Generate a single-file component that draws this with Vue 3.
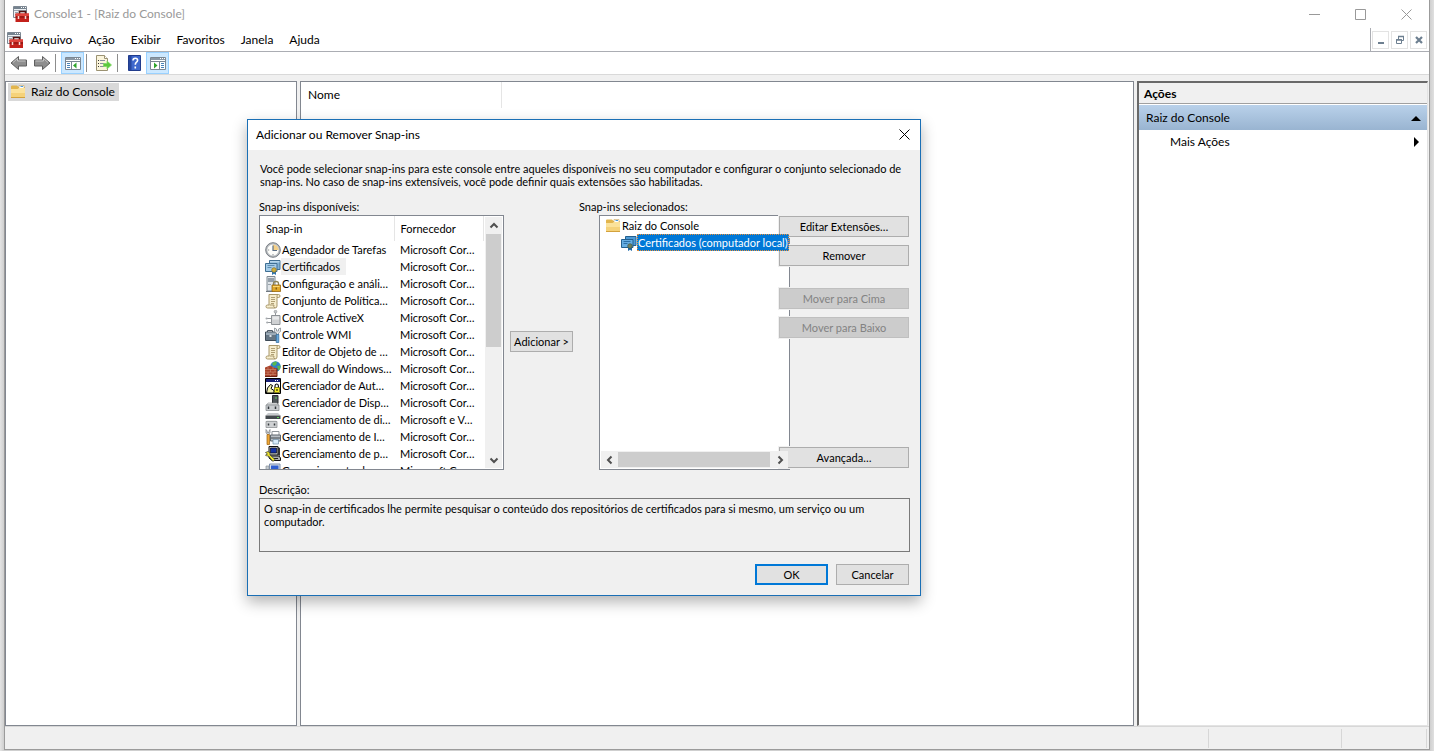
<script setup>
const menus = ['Arquivo', 'Ação', 'Exibir', 'Favoritos', 'Janela', 'Ajuda']

const scroll =
  '<path d="M4 1.500h9.500q1.500 0 1.500 1.500t-1.500 1.500H12V13q0 2-2 2H2.500Q1 15 1 13.500T2.500 12H4z" fill="#f6edcd" stroke="#a8976a"/><path d="M4.500 12H9q-1 1.500 1 3M12 4.500q-.5-2 1-3" fill="none" stroke="#a8976a"/><path d="M6 4.500h4M6 6.500h4M6 8.500h4M6 10.500h3" stroke="#b09f75"/>'

const icons = {
  console:
    '<path d="M.5.500h13v11H.5z" fill="#eef1f4" stroke="#7d8893"/><path d="M1 1h12v2H1z" fill="#75838f"/><path d="M8 1.500h1M10 1.500h1M12 1.500h1" stroke="#fff"/><path d="M1 4.500h12" stroke="#9aa5af"/><path d="M2 6.500h3M2 8.500h2" stroke="#9aa4ae"/><path d="M6.500 8V5.500h6V8" fill="none" stroke="#4e1410" stroke-width="1.600"/><path d="M2.500 7.500H16V16H2.500z" fill="#c3211b"/><path d="M2.500 7.500H16V10H2.500z" fill="#e0453d"/><path d="M2.500 11h13.500" stroke="#7d100c"/><path d="M5.500 10v3M12.500 10v3" stroke="#f4d8d3" stroke-width="1.500"/>',
  folder:
    '<path d="M1 2.500q0-1 1-1h5l1.500 1.500H14q1 0 1 1V14H1z" fill="#e2b54d"/><path d="M9 1.500h5v4H9z" fill="#fff" stroke="#c9a45c" stroke-width=".6"/><path d="M10.500 2.500H13" stroke="#4b9bdc"/><path d="M1 5h6.500L9 4h6v10H1z" fill="#fbe29b"/><path d="M1 9h14v5H1z" fill="#f5d27a"/><path d="M1 13.500h14" stroke="#d3a23d"/>',
  clock:
    '<circle cx="8" cy="8" r="7.300" fill="#b9bdc1" stroke="#777d83"/><circle cx="8" cy="8" r="5.600" fill="#fdfdfa"/><path d="M8 8V2.400A5.600 5.600 0 0 1 13.600 8z" fill="#f3cf87"/><path d="M8 3.500V8.500h4" fill="none" stroke="#5c6f86" stroke-width="1.200"/><path d="M8 12v1.300M3 8h1.200" stroke="#8b8f93"/>',
  certificate:
    '<path d="M4.500 1.500h10.500v9h-10.500z" fill="#7fb0d4" stroke="#3f6f93"/><path d="M5 2h9.500v1.500H5z" fill="#b5d6ec"/><path d="M.5 4.500h11.500v8H.5z" fill="#a5cce8" stroke="#3f6f93"/><path d="M2.500 6.500h7M2.500 8.500h4" stroke="#5d8fb3"/><path d="M7 11.500V16l2-1.200 2 1.200v-4.500z" fill="#2f74b0"/><circle cx="9" cy="11" r="2.300" fill="#cfae3c" stroke="#857127" stroke-width=".7"/>',
  certificateSelected:
    '<path d="M4.500 1.500h10.500v9h-10.500z" fill="#4c9ad6" stroke="#23608f"/><path d="M.5 4.500h11.500v8H.5z" fill="#65ade2" stroke="#23608f"/><path d="M2.500 6.500h7M2.500 8.500h4" stroke="#2a6fa6"/><path d="M7 11.500V16l2-1.200 2 1.200v-4.500z" fill="#1a68aa"/><circle cx="9" cy="11" r="2.300" fill="#6f7f5c" stroke="#3f5a4c" stroke-width=".7"/>',
  serverLock:
    '<path d="M2 .5h8v14.500H2z" fill="#dfe4e8" stroke="#7f8992"/><path d="M3 3h6M3 5h6" stroke="#4d5d6c"/><path d="M3 8.500h3" stroke="#9aa3ab"/><path d="M1 15.500h7" stroke="#6f7880"/><path d="M8.500 9V7.500q0-2 2.500-2t2.500 2V9" fill="none" stroke="#8d8457" stroke-width="1.300"/><path d="M7 9h8.500v6.500H7z" fill="#e0a82a" stroke="#94660e" stroke-width=".8"/><path d="M8 10.500h6.500" stroke="#f8d877"/><path d="M11.200 11.500v2" stroke="#5c4108"/>',
  scroll,
  activex:
    '<path d="M6.500 5.500h8.500v9H6.500z" fill="#cfd1d3" stroke="#8e9296"/><path d="M7.500 6.500h6.500v3H7.500z" fill="#e8e9ea"/><path d="M10.500 5V2M6 8.500H2M6 12.500H3" stroke="#94989c"/><circle cx="10.500" cy="1.700" r="1.400" fill="#c4c7ca" stroke="#8e9296" stroke-width=".6"/><circle cx="1.600" cy="8.500" r="1.100" fill="#a7abaf"/><circle cx="2.200" cy="12.500" r="1.100" fill="#a7abaf"/>',
  toolbox:
    '<path d="M2.500 5V3.500h5V5" fill="none" stroke="#4e5a66"/><path d="M.5 5h11v8.500H.5z" fill="#667684" stroke="#3e4a56"/><path d="M1 5.500h10v2.500H1z" fill="#9dacb9"/><path d="M4.500 8h2v2h-2z" fill="#dce2e7"/><path d="M9.500 1v3.500l2 1.500V8h2V6l2-1.500V1l-2 1v2h-2V2z" fill="#e7eaed" stroke="#7c858d" stroke-width=".7"/><path d="M11.200 7.500h2.600V15.500h-2.600z" fill="#69a9dc" stroke="#2d6799" stroke-width=".7"/>',
  firewall:
    '<circle cx="10.500" cy="5.500" r="5.200" fill="#2f82c8"/><path d="M7 2.500q3-3 5-1.500l-1 3-2.500 1zM12 5l3.500-.5q.5 3-2 5z" fill="#59b84f"/><path d="M0 6.500l5-2 5 2.500 2 .5v8H0z" fill="#a9442c"/><path d="M0 8.500h12M0 11h12M0 13.500h12M3 6v2.500M8 6v2.500M5.500 8.500V11M10 8.500V11M3 11v2.500M8 11v2.500M5.500 13.500v2" stroke="#d08f77" stroke-width=".6"/><path d="M0 15.500h12V7.500" fill="none" stroke="#6b2213"/>',
  authorization:
    '<path d="M.5.500h15v15H.5z" fill="#fff" stroke="#000"/><path d="M1 1h14v3H1z" fill="#1b2278"/><path d="M10 2.500h1M12 2.500h1" stroke="#fff"/><path d="M1.500 15l1-5 3-3.500 2 1-1.500 3 3 2V15z" fill="#f2f0b0" stroke="#000"/><path d="M10 10V8q0-2 1.700-2t1.700 2v2" fill="none" stroke="#000" stroke-width="1.100"/><path d="M9.500 9.500h5v5h-5z" fill="#f4ec24" stroke="#6b6400" stroke-width=".8"/><path d="M12 11v2" stroke="#000"/>',
  device:
    '<path d="M7.500.500h5.500v8H7.500z" fill="#4f5558" stroke="#2c3133"/><path d="M11 2v2" stroke="#5fd35b"/><path d="M3 8h9l1.500 2H1.500z" fill="#eceded" stroke="#8b8f92" stroke-width=".6"/><path d="M1 10h13v5.500H1z" fill="#c9cccf" stroke="#7d8185" stroke-width=".7"/><path d="M3.500 11.500v2.500M10.500 11.500v2.500" stroke="#303538" stroke-width="1.500"/>',
  disk:
    '<path d="M3 1h10l2.500 2.500H.5z" fill="#c7cacd"/><path d="M.5 3.500h15v3.500H.5z" fill="#44494d"/><path d="M12 5.500h2" stroke="#5fd35b"/><path d="M2 8h9l1 1.500H1z" fill="#ececec"/><path d="M1 9.500h11v6H1z" fill="#cfd1d3" stroke="#84888b" stroke-width=".7"/><path d="M3.500 11.500v2M9.500 11.500v2" stroke="#33383b" stroke-width="1.500"/>',
  printer:
    '<path d="M7 2.500h7V7H7z" fill="#fff" stroke="#8f959a"/><path d="M5.500 6h10v6h-10z" fill="#b9bfc5" stroke="#5f676e"/><path d="M6 9h9" stroke="#3f464c"/><path d="M8 10.500h5.500v4.500H8z" fill="#d8ebfa" stroke="#6f8ca3" stroke-width=".7"/><path d="M1 .5v3.500l2 1.500 2-1.500V.5L4 2v1.500H2.200V2z" fill="#e5e7e9" stroke="#747a80" stroke-width=".7"/><path d="M2 5.500h2.500v10H2z" fill="#efa634" stroke="#9a5f0c" stroke-width=".7"/>',
  policies:
    '<path d="M4 .5h9v8.500H4z" fill="#c7c9cb" stroke="#111"/><path d="M5.500 2h6v5h-6z" fill="#1531a6" stroke="#000" stroke-width=".6"/><path d="M13 1l2 1v8l-2-1z" fill="#333"/><path d="M4 10h10l1.500 2v2.500H7L4 12z" fill="#aeb0b2" stroke="#111"/><path d="M8 12.500h5" stroke="#222"/><path d="M.5 6.500l2.500-1 2 1.500v2l5 4.500-2 2L3.500 10H1.500L.5 9l2-1z" fill="#f2ea2d" stroke="#333" stroke-width=".7"/>',
  computer:
    '<path d="M4.500 1h10.500v9H4.500z" fill="#d8dee4" stroke="#7d8fae"/><path d="M6 2.500h7.500V8H6z" fill="#2f5fd0"/><path d="M1 3h3v9H1z" fill="#c5cbd1" stroke="#8a9299" stroke-width=".7"/><path d="M3 12h10v3H3z" fill="#c8cdd1"/>'
}

const snapins = [
  ['clock', 'Agendador de Tarefas', 'Microsoft Cor…'],
  ['certificate', 'Certificados', 'Microsoft Cor…'],
  ['serverLock', 'Configuração e análi…', 'Microsoft Cor…'],
  ['scroll', 'Conjunto de Política…', 'Microsoft Cor…'],
  ['activex', 'Controle ActiveX', 'Microsoft Cor…'],
  ['toolbox', 'Controle WMI', 'Microsoft Cor…'],
  ['scroll', 'Editor de Objeto de …', 'Microsoft Cor…'],
  ['firewall', 'Firewall do Windows…', 'Microsoft Cor…'],
  ['authorization', 'Gerenciador de Aut…', 'Microsoft Cor…'],
  ['device', 'Gerenciador de Disp…', 'Microsoft Cor…'],
  ['disk', 'Gerenciamento de di…', 'Microsoft e V…'],
  ['printer', 'Gerenciamento de I…', 'Microsoft Cor…'],
  ['policies', 'Gerenciamento de p…', 'Microsoft Cor…'],
  ['computer', 'Gerenciamento do …', 'Microsoft Cor…']
]

const description =
  'O snap-in de certificados lhe permite pesquisar o conteúdo dos repositórios de certificados para si mesmo, um serviço ou um computador.'
</script>

<template>
  <div class="desktop">
    <div class="window">
      <header class="titlebar">
        <svg class="icon" viewBox="0 0 16 16" v-html="icons.console"></svg>
        <h1>Console1 - [Raiz do Console]</h1>
        <div class="caption-buttons">
          <button aria-label="Minimizar"><svg viewBox="0 0 11 11"><path d="M0 5.500h11" /></svg></button>
          <button aria-label="Maximizar"><svg viewBox="0 0 11 11"><path d="M.5.500h10v10H.5z" /></svg></button>
          <button aria-label="Fechar"><svg viewBox="0 0 11 11"><path d="M.5.500l10 10M10.500.500l-10 10" /></svg></button>
        </div>
      </header>

      <nav class="menubar">
        <svg class="icon" viewBox="0 0 16 16" v-html="icons.console"></svg>
        <button v-for="m in menus" :key="m" class="menu">{{ m }}</button>
        <div class="child-buttons">
          <button aria-label="Minimizar console"><svg viewBox="0 0 10 10"><path d="M2 8h6" stroke-width="2" /></svg></button>
          <button aria-label="Restaurar console">
            <svg viewBox="0 0 10 10"><path d="M3.500 4V1.500h5v4H7" /><path d="M3 1.500h6M1 5h6" stroke-width="1.500" /><path d="M1.500 4.500h5v4h-5z" /></svg>
          </button>
          <button aria-label="Fechar console"><svg viewBox="0 0 10 10"><path d="M2 2l6 6M8 2L2 8" stroke-width="2.200" /></svg></button>
        </div>
      </nav>

      <div class="toolbar">
        <button class="tool" aria-label="Voltar">
          <svg viewBox="0 0 18 16"><path d="M1 8l7.500-6.500V5H16.500v6H8.500v3.500z" fill="#8f8f8f" stroke="#5f5f5f" /><path d="M3 7.500L7.500 3.500V6H15.500" fill="none" stroke="#c4c4c4" /></svg>
        </button>
        <button class="tool" aria-label="Avançar">
          <svg viewBox="0 0 18 16"><path d="M17 8L9.500 1.500V5H1.500v6h8v3.500z" fill="#8f8f8f" stroke="#5f5f5f" /><path d="M2.500 6H10.500V3.500L15 7.500" fill="none" stroke="#c4c4c4" /></svg>
        </button>
        <span class="divider"></span>
        <button class="tool on" aria-label="Mostrar/ocultar árvore de console">
          <svg viewBox="0 -1 18 16"><path d="M1.500 1.500h15v12h-15z" fill="#fff" stroke="#7b8793" /><path d="M2 2h14v2H2z" fill="#8b98a5" /><path d="M11 2.500h1M13 2.500h1M15 2.500h1" stroke="#fff" /><path d="M2 5.500h14M7.500 6v7" stroke="#7b8793" /><path d="M3 7.500h3M3 9.500h3M3 11.500h3" stroke="#4a83b8" /><path d="M12.500 6.500v6L9 9.500z" fill="#2fa52b" /></svg>
        </button>
        <span class="divider"></span>
        <button class="tool" aria-label="Exportar lista">
          <svg viewBox="0 0 18 16"><path d="M1.500.500h8l3 3v12h-11z" fill="#fbf5dc" stroke="#9b9272" /><path d="M9.500.500v3h3" fill="#fff" stroke="#9b9272" /><path d="M3 5.500h1M3 8.500h1M3 11.500h1" stroke="#333" /><path d="M5 5.500h5M5 8.500h4M5 11.500h4" stroke="#8a8fa0" /><path d="M8.500 8.500h3.500V6l4.500 4-4.500 4v-2.500H8.500z" fill="#5cc83c" stroke="#7fd566" stroke-width=".8" /></svg>
        </button>
        <span class="divider"></span>
        <button class="tool" aria-label="Ajuda">
          <svg viewBox="0 0 18 16"><path d="M2.500.500h12v15h-12z" fill="#3f68cc" stroke="#213c8c" /><path d="M3 1h2.500v14H3z" fill="#27479f" /><path d="M7 5.500q0-2.300 2.300-2.300t2.300 2.100q0 1.300-1.300 2.100-1 .8-1 2.300M9.300 11.500v2" fill="none" stroke="#fff" stroke-width="1.600" /></svg>
        </button>
        <button class="tool on" aria-label="Mostrar/ocultar painel de ações">
          <svg viewBox="0 -1 18 16"><path d="M1.500 1.500h15v12h-15z" fill="#fff" stroke="#7b8793" /><path d="M2 2h14v2H2z" fill="#8b98a5" /><path d="M11 2.500h1M13 2.500h1M15 2.500h1" stroke="#fff" /><path d="M2 5.500h14M10.500 6v7" stroke="#7b8793" /><path d="M12 7.500h3M12 9.500h3M12 11.500h3" stroke="#4a83b8" /><path d="M5 6.500v6l3.500-3z" fill="#2fa52b" /></svg>
        </button>
      </div>

      <main class="panes">
        <section class="pane tree-pane">
          <div class="node">
            <svg class="icon" viewBox="0 0 16 16" v-html="icons.folder"></svg>
            <span>Raiz do Console</span>
          </div>
        </section>
        <section class="pane list-pane">
          <div class="list-head">Nome</div>
        </section>
        <aside class="actions">
          <h2>Ações</h2>
          <button class="group">Raiz do Console<svg viewBox="0 0 10 10"><path d="M0 8l5-5 5 5z" /></svg></button>
          <button class="more">Mais Ações<svg viewBox="0 0 10 10"><path d="M3 0l5 5-5 5z" /></svg></button>
        </aside>
      </main>

      <footer class="statusbar"><span></span><span></span><span></span></footer>
    </div>

    <div class="dialog" role="dialog" aria-labelledby="dialog-title">
      <header class="dialog-title">
        <h2 id="dialog-title">Adicionar ou Remover Snap-ins</h2>
        <button aria-label="Fechar diálogo"><svg viewBox="0 0 11 11"><path d="M.5.500l10 10M10.500.500l-10 10" /></svg></button>
      </header>
      <div class="dialog-body">
        <p class="intro">
          Você pode selecionar snap-ins para este console entre aqueles disponíveis no seu computador e configurar o conjunto selecionado de
          snap-ins. No caso de snap-ins extensíveis, você pode definir quais extensões são habilitadas.
        </p>
        <div class="columns">
          <div class="available">
            <div id="available-label" class="label">Snap-ins disponíveis:</div>
            <div class="box">
              <div class="table-clip">
                <table aria-labelledby="available-label">
                  <thead>
                    <tr><th class="name">Snap-in</th><th>Fornecedor</th></tr>
                  </thead>
                  <tbody>
                    <tr v-for="(s, i) in snapins" :key="s[1]">
                      <td class="name">
                        <div class="snapin">
                          <svg class="icon" viewBox="0 0 16 16" v-html="icons[s[0]]"></svg>
                          <span :class="{ current: i === 1 }">{{ s[1] }}</span>
                        </div>
                      </td>
                      <td>{{ s[2] }}</td>
                    </tr>
                  </tbody>
                </table>
              </div>
              <div class="vscroll">
                <button aria-label="Rolar para cima"><svg viewBox="0 0 10 10"><path d="M1.500 6.500L5 3l3.500 3.500" /></svg></button>
                <div class="track"><div class="thumb"></div></div>
                <button aria-label="Rolar para baixo"><svg viewBox="0 0 10 10"><path d="M1.500 3.500L5 7l3.500-3.500" /></svg></button>
              </div>
            </div>
          </div>

          <button class="btn add">Adicionar &gt;</button>

          <div class="selected">
            <div class="label">Snap-ins selecionados:</div>
            <div class="box tree">
              <div class="tree-row">
                <svg class="icon" viewBox="0 0 16 16" v-html="icons.folder"></svg>
                <span>Raiz do Console</span>
              </div>
              <div class="tree-row child">
                <svg class="icon" viewBox="0 0 16 16" v-html="icons.certificateSelected"></svg>
                <span class="highlight">Certificados (computador local)</span>
              </div>
              <div class="hscroll">
                <button aria-label="Rolar para a esquerda"><svg viewBox="0 0 10 10"><path d="M6.500 1.500L3 5l3.500 3.500" /></svg></button>
                <div class="thumb"></div>
                <button aria-label="Rolar para a direita"><svg viewBox="0 0 10 10"><path d="M3.500 1.500L7 5 3.500 8.500" /></svg></button>
              </div>
            </div>
          </div>

          <div class="side">
            <button class="btn">Editar Extensões…</button>
            <button class="btn">Remover</button>
            <button class="btn up" disabled>Mover para Cima</button>
            <button class="btn" disabled>Mover para Baixo</button>
            <button class="btn advanced">Avançada…</button>
          </div>
        </div>

        <label class="label" for="description">Descrição:</label>
        <textarea id="description" readonly :value="description"></textarea>

        <div class="actions-row">
          <button class="btn default">OK</button>
          <button class="btn">Cancelar</button>
        </div>
      </div>
    </div>
  </div>
</template>

<style>
body {
  background: #d9d9d9;
}
</style>

<style scoped>
.desktop {
  position: relative;
  display: flex;
  box-sizing: border-box;
  min-height: 100vh;
  padding: 0 4px 1px;
  background: linear-gradient(90deg, #e4e4e4, #cfcfcf 4px, #cfcfcf calc(100% - 4px), #e0e0e0);
  font: 12px/16px Lato, "Open Sans", sans-serif;
  color: #000;
}
* {
  box-sizing: border-box;
}
button {
  padding: 0;
  border: 0;
  background: none;
  color: inherit;
  font: inherit;
}
h1,
h2,
p {
  margin: 0;
  font: inherit;
}
.icon {
  flex: none;
  width: 16px;
  height: 16px;
}
.window {
  display: flex;
  flex: 1;
  flex-direction: column;
  border: solid #9b9b9b;
  border-width: 0 1px 1px;
  background: #f0f0f0;
}
.titlebar {
  display: flex;
  align-items: center;
  gap: 5px;
  height: 28px;
  padding-left: 8px;
  background: #fff;
  color: #999;
}
.caption-buttons {
  display: flex;
  margin-left: auto;
}
.caption-buttons button {
  display: grid;
  place-items: center;
  width: 46px;
  height: 27px;
}
.caption-buttons svg,
.dialog-title svg {
  width: 11px;
  height: 11px;
  fill: none;
  stroke: #999;
}
.menubar {
  display: flex;
  align-items: center;
  height: 24px;
  padding-left: 2px;
  border-bottom: 1px solid #abadb3;
  background: #fff;
}
.menu {
  height: 22px;
  padding: 0 8px;
}
.child-buttons {
  display: flex;
  align-items: center;
  align-self: stretch;
  gap: 2px;
  margin-left: auto;
  padding: 0 2px 0 1px;
  border-left: 1px solid #abadb3;
}
.child-buttons button {
  display: grid;
  place-items: center;
  width: 17px;
  height: 18px;
  border: 1px solid #e3e3e3;
}
.child-buttons svg {
  width: 10px;
  height: 10px;
  fill: none;
  stroke: #6d7f90;
}
.toolbar {
  display: flex;
  align-items: center;
  height: 23px;
  padding-left: 2px;
  border-bottom: 1px solid #d9d9d9;
  background: #fff;
}
.tool {
  display: grid;
  place-items: center;
  width: 23px;
  height: 22px;
}
.tool svg {
  width: 18px;
  height: 16px;
}
.tool.on {
  border: 1px solid #99d1ff;
  background: #cce8ff;
}
.divider {
  width: 1px;
  height: 18px;
  margin: 0 5px 0 2px;
  background: #8d8d8d;
}
.panes {
  display: flex;
  flex: 1;
  gap: 3px;
  padding-top: 6px;
}
.pane {
  border: 1px solid #828790;
  background: #fff;
}
.tree-pane {
  width: 292px;
  padding: 1px 2px;
}
.node {
  display: flex;
  align-items: center;
  gap: 5px;
  width: max-content;
  height: 18px;
  padding: 0 4px 0 2px;
  background: #d9d9d9;
}
.list-pane {
  flex: 1;
}
.list-head {
  width: 201px;
  height: 26px;
  padding-left: 7px;
  border-right: 1px solid #e5e5e5;
  line-height: 26px;
}
.actions {
  width: 291px;
  margin-right: 1px;
  border: 1px solid #e3e3e3;
  border-top: 2px solid #696969;
  border-left: 2px solid #696969;
  background: #fff;
}
.actions h2 {
  height: 21px;
  padding-left: 5px;
  border-bottom: 1px solid #a0a0a0;
  background: #f0f0f0;
  font-weight: 700;
  line-height: 21px;
}
.actions button {
  display: flex;
  align-items: center;
  justify-content: space-between;
  width: 100%;
  height: 25px;
  padding: 0 6px 0 7px;
}
.actions .group {
  margin-top: 1px;
  background: linear-gradient(#b9d1ea, #99b4d1);
}
.actions .more {
  height: 24px;
  padding-left: 31px;
}
.actions svg {
  width: 10px;
  height: 10px;
}
.statusbar {
  display: flex;
  justify-content: flex-end;
  height: 23px;
  padding: 2px 2px 1px;
  border-top: 1px solid #d7d7d7;
}
.statusbar span {
  border-right: 1px solid #d7d7d7;
}
.statusbar span:nth-child(2) {
  width: 133px;
}
.statusbar span:nth-child(3) {
  width: 85px;
}
.dialog {
  position: absolute;
  top: 119px;
  left: 247px;
  width: 674px;
  border: 1px solid #1a6fb5;
  background: #f0f0f0;
  box-shadow: 0 6px 14px rgba(0, 0, 0, 0.3);
}
.dialog-title {
  display: flex;
  align-items: center;
  justify-content: space-between;
  height: 30px;
  padding: 0 10px 0 8px;
  background: #fff;
}
.dialog-title button {
  display: grid;
  height: 13px;
}
.dialog-title svg {
  stroke: #000;
}
.dialog-body {
  padding: 12px 10px 10px 11px;
  font-size: 11px;
  line-height: 13px;
}
.intro {
  padding-left: 1px;
}
.label {
  display: block;
  margin-bottom: 2px;
}
.columns {
  display: flex;
  align-items: flex-start;
  margin: 12px 1px 13px 0;
}
.available {
  flex: 1;
}
.box {
  display: flex;
  height: 255px;
  border: 1px solid #828790;
  background: #fff;
}
.table-clip {
  flex: 1;
  overflow: hidden;
}
table {
  width: 100%;
  border-collapse: collapse;
  table-layout: fixed;
}
th {
  height: 25px;
  padding: 0 0 0 6px;
  border-right: 1px solid #e5e5e5;
  font-weight: 400;
  text-align: left;
}
th.name {
  width: 134px;
  padding-left: 6px;
}
td {
  height: 17px;
  padding: 0 0 0 6px;
  white-space: nowrap;
}
td.name {
  padding-left: 5px;
}
.snapin {
  display: flex;
  align-items: center;
}
.snapin span {
  height: 17px;
  padding: 0 1px;
  line-height: 17px;
}
.snapin .current {
  padding-right: 6px;
  background: #f0f0f0;
}
.vscroll {
  display: flex;
  flex-direction: column;
  width: 17px;
  margin: 1px;
  background: #f0f0f0;
}
.vscroll button,
.hscroll button {
  display: grid;
  place-items: center;
  width: 17px;
  height: 17px;
}
.vscroll svg,
.hscroll svg {
  width: 10px;
  height: 10px;
  fill: none;
  stroke: #505050;
  stroke-width: 2;
}
.track {
  flex: 1;
}
.vscroll .thumb {
  height: 113px;
  margin: 0 1px;
  background: #cdcdcd;
}
.btn {
  height: 21px;
  border: 1px solid #adadad;
  background: #e1e1e1;
}
.add {
  width: 63px;
  margin: 131px 6px 0;
}
.selected {
  width: 211px;
}
.tree {
  flex-direction: column;
  margin-left: 20px;
  padding-top: 1px;
}
.tree-row {
  display: flex;
  align-items: center;
  height: 17px;
  padding-left: 5px;
}
.tree-row span {
  padding: 0 1px;
  line-height: 17px;
  white-space: nowrap;
}
.child {
  padding-left: 21px;
}
.tree-row .highlight {
  position: relative;
  z-index: 2;
  outline: 1px dotted #e8903a;
  outline-offset: -1px;
  background: #0078d7;
  color: #fff;
}
.hscroll {
  position: relative;
  z-index: 2;
  display: flex;
  justify-content: space-between;
  margin: auto 1px 1px;
  background: #f0f0f0;
}
.hscroll .thumb {
  flex: 1;
  margin: 1px 1px 1px 0;
  background: #cdcdcd;
}
.side {
  position: relative;
  z-index: 1;
  display: flex;
  flex-direction: column;
  gap: 8px;
  width: 130px;
  height: 254px;
  margin: 16px 0 0 -11px;
}
.side .btn {
  box-shadow: 0 0 0 1px #f0f0f0;
}
.side .up {
  margin-top: 14px;
}
.side .advanced {
  margin-top: 101px;
}
.btn:disabled {
  border-color: #bfbfbf;
  background: #cccccc;
  color: #838383;
}
textarea {
  display: block;
  width: 100%;
  height: 54px;
  padding: 3px 4px;
  border: 1px solid #7a7a7a;
  outline: 0;
  background: #f0f0f0;
  color: inherit;
  font: inherit;
  resize: none;
}
.actions-row {
  display: flex;
  justify-content: flex-end;
  gap: 8px;
  margin: 12px 1px 0 0;
}
.actions-row .btn {
  width: 73px;
}
.actions-row .default {
  border: 2px solid #0078d7;
}
</style>
